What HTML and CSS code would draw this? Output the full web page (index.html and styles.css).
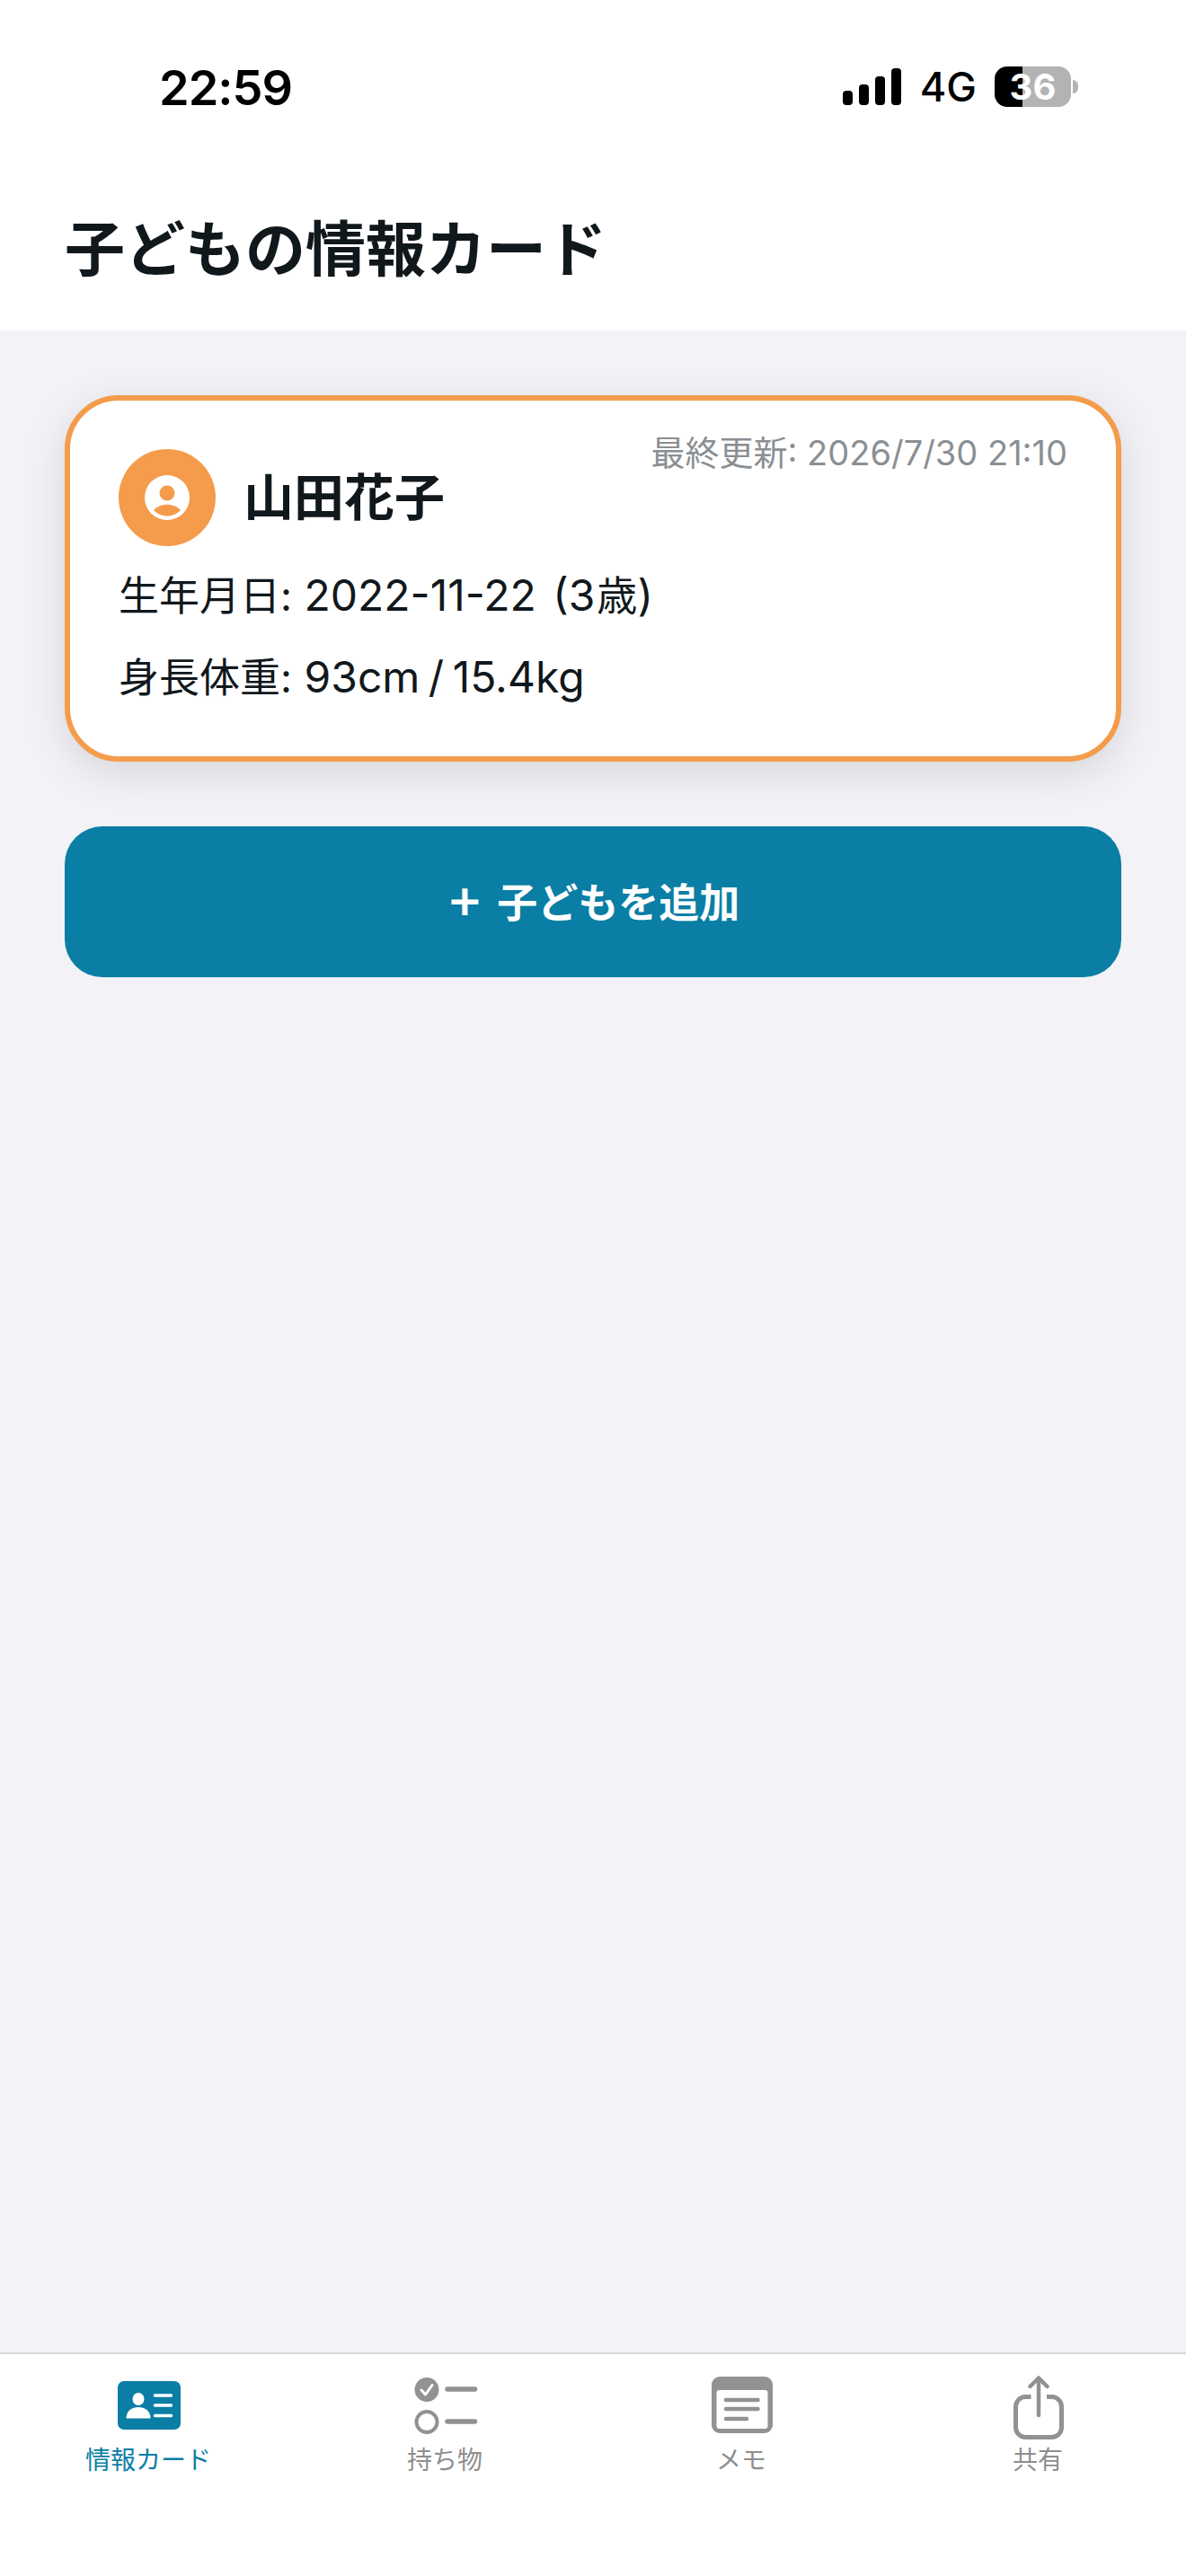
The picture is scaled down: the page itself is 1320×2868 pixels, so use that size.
FILE: index.html
```html
<!DOCTYPE html>
<html lang="ja">
<head>
  <meta charset="UTF-8" />
  <title>子どもの情報カード</title>
  <meta name="viewport" content="width=device-width, initial-scale=1.0" />
  <link rel="stylesheet" href="styles.css">
</head>
<body>

  <div class="pantalla">

    <header class="cabecera">
      <div class="estado">
        <span class="hora">22:59</span>
        <div class="estado-derecha">
          <div class="senal">
            <span class="barra b1"></span>
            <span class="barra b2"></span>
            <span class="barra b3"></span>
            <span class="barra b4"></span>
          </div>
          <span class="red">4G</span>
          <div class="bateria">
            <div class="bateria-cuerpo"><span>36</span></div>
            <div class="bateria-punta"></div>
          </div>
        </div>
      </div>
      <h1 class="titulo">子どもの情報カード</h1>
    </header>

    <main class="contenido">
      <section class="tarjeta">
        <span class="actualizado">最終更新: 2026/7/30 21:10</span>
        <div class="tarjeta-fila">
          <svg class="avatar" width="108" height="108" viewBox="0 0 108 108">
            <circle cx="54" cy="54" r="54" fill="#f49c4c" />
            <circle cx="54" cy="54" r="25" fill="#fff" />
            <circle cx="54" cy="49" r="8.5" fill="#f49c4c" />
            <path d="M39 68C42 64 48 61.7 54 61.7C60 61.7 66 64 69 68C65 72 60 74.5 54 74.5C48 74.5 43 72 39 68Z" fill="#f49c4c" />
          </svg>
          <span class="nombre">山田花子</span>
        </div>
        <p class="dato"><span class="etiqueta">生年月日:</span> 2022-11-22 <span class="edad">(3<span class="etiqueta">歳</span>)</span></p>
        <p class="dato medidas"><span class="etiqueta">身長体重:</span> 93cm / 15.4kg</p>
      </section>

      <button class="agregar"><span class="mas">+</span>子どもを追加</button>
    </main>

    <nav class="pestanas">
      <div class="pestana activa">
        <svg width="80" height="72" viewBox="0 0 80 72">
          <rect x="6" y="6" width="70" height="54" rx="7" fill="#0a7ea4" />
          <ellipse cx="29" cy="26" rx="6.5" ry="7" fill="#fff" />
          <path d="M15.5 47.5C15.5 39 22 35 29 35C36 35 42.5 39 42.5 47.5Z" fill="#fff" />
          <path d="M47.5 22H65.5M47.5 33H65.5M47.5 44.5H65.5" stroke="#fff" stroke-width="3.5" stroke-linecap="round" />
        </svg>
        <span>情報カード</span>
      </div>
      <div class="pestana">
        <svg width="80" height="72" viewBox="0 0 80 72">
          <circle cx="20" cy="15.5" r="13.5" fill="#929292" />
          <path d="M14 16L18.5 21L26 10.5" fill="none" stroke="#fff" stroke-width="3" stroke-linecap="round" stroke-linejoin="round" />
          <path d="M43 15H73.5M43 51H73.5" stroke="#929292" stroke-width="5.5" stroke-linecap="round" />
          <circle cx="20" cy="51.5" r="11.5" fill="none" stroke="#929292" stroke-width="4" />
        </svg>
        <span>持ち物</span>
      </div>
      <div class="pestana">
        <svg width="80" height="72" viewBox="0 0 80 72">
          <rect x="7" y="1" width="68" height="63" rx="9" fill="#929292" />
          <rect x="12.5" y="16" width="57" height="43" rx="3" fill="#fff" />
          <path d="M23 27H58.5M23 37H58.5M23 48H46" stroke="#929292" stroke-width="4.5" stroke-linecap="round" />
        </svg>
        <span>メモ</span>
      </div>
      <div class="pestana">
        <svg width="80" height="72" viewBox="0 0 80 72">
          <path d="M32.5 23.5H26.5A11 11 0 0 0 15.5 34.5V57.5A11 11 0 0 0 26.5 68.5H55.5A11 11 0 0 0 66.5 57.5V34.5A11 11 0 0 0 55.5 23.5H50" fill="none" stroke="#929292" stroke-width="5" />
          <path d="M41 44V3M31.5 12L41 2.5L50.5 12" fill="none" stroke="#929292" stroke-width="4.5" stroke-linecap="round" stroke-linejoin="round" />
        </svg>
        <span>共有</span>
      </div>
    </nav>

  </div>

</body>
</html>
```

FILE: styles.css
```css
body {
  margin: 0;
  padding: 0;
  font-family: Inter, "Noto Sans CJK JP", sans-serif;
  color: #11181c;
  background: #f2f2f7;
}

.pantalla {
  width: 1320px;
  height: 2868px;
  display: flex;
  flex-direction: column;
  overflow: hidden;
}

/* cabecera blanca con barra de estado */
.cabecera {
  height: 368px;
  background: #fff;
  box-sizing: border-box;
}

.estado {
  height: 238px;
  padding: 72px 120px 0 177px;
  box-sizing: border-box;
  display: flex;
  justify-content: space-between;
  align-items: flex-start;
}

.hora {
  font-size: 54px;
  font-weight: 600;
  line-height: 52px;
  letter-spacing: -1px;
  color: #000;
}

.estado-derecha {
  display: flex;
  align-items: center;
  height: 45px;
  margin-top: 2px;
}

.senal {
  display: flex;
  align-items: flex-end;
  gap: 7px;
  height: 41px;
  margin-right: 21px;
}

.barra {
  width: 11px;
  background: #000;
  border-radius: 4px;
}

.b1 { height: 16px; }
.b2 { height: 23px; }
.b3 { height: 32px; }
.b4 { height: 41px; }

.red {
  font-size: 45px;
  font-weight: 500;
  line-height: 45px;
  color: #000;
  margin-right: 20px;
}

.bateria {
  display: flex;
  align-items: center;
  gap: 2px;
}

.bateria-cuerpo {
  width: 85px;
  height: 45px;
  border-radius: 14px;
  background: linear-gradient(to right, #000 31px, #b3b3b3 31px);
  display: flex;
  align-items: center;
  justify-content: center;
  color: #fff;
  font-size: 40px;
  font-weight: 700;
  line-height: 45px;
}

.bateria-punta {
  width: 6px;
  height: 15px;
  background: #b3b3b3;
  border-radius: 0 8px 8px 0;
}

.titulo {
  margin: 0;
  padding-left: 72px;
  font-size: 67px;
  font-weight: 700;
  line-height: 80px;
}

/* contenido */
.contenido {
  flex: 1;
  padding: 72px 72px 0;
  display: flex;
  flex-direction: column;
  gap: 72px;
}

.tarjeta {
  position: relative;
  height: 408px;
  box-sizing: border-box;
  background: #fff;
  border: 6px solid #f49c4c;
  border-radius: 60px;
  padding: 54px 54px 0;
  box-shadow: 0 12px 48px rgba(0, 0, 0, 0.12);
}

.actualizado {
  position: absolute;
  top: 31px;
  right: 54px;
  font-size: 38px;
  line-height: 54px;
  color: #8a8f93;
}

.tarjeta-fila {
  display: flex;
  align-items: center;
  gap: 31px;
  height: 108px;
  margin-bottom: 19px;
}

.nombre {
  font-size: 56px;
  font-weight: 700;
  line-height: 72px;
}

.dato {
  margin: 0 0 18px;
  font-size: 48px;
  line-height: 72px;
}

.medidas {
  word-spacing: -4px;
}

.medidas .etiqueta {
  margin-right: 4px;
}

.etiqueta {
  font-size: 45px;
}

.edad {
  margin-left: 5px;
}

.edad .etiqueta {
  margin-left: 2px;
}

.agregar {
  height: 168px;
  border: none;
  border-radius: 42px;
  padding: 0 0 3px;
  background: #0a7ea4;
  color: #fff;
  font-family: inherit;
  font-size: 45px;
  font-weight: 600;
  display: flex;
  align-items: center;
  justify-content: center;
  gap: 15px;
}

.mas {
  font-size: 62px;
  font-weight: 500;
  line-height: 60px;
  margin-top: -6px;
}

/* barra de pestañas */
.pestanas {
  height: 249px;
  box-sizing: border-box;
  background: #fff;
  border-top: 2px solid #d8d8d8;
  padding-top: 24px;
  display: flex;
}

.pestana {
  flex: 1;
  display: flex;
  flex-direction: column;
  align-items: center;
  color: #8e8e8e;
  font-size: 28px;
  line-height: 36px;
  gap: 4px;
}

.pestana.activa {
  color: #0a7ea4;
}
```
